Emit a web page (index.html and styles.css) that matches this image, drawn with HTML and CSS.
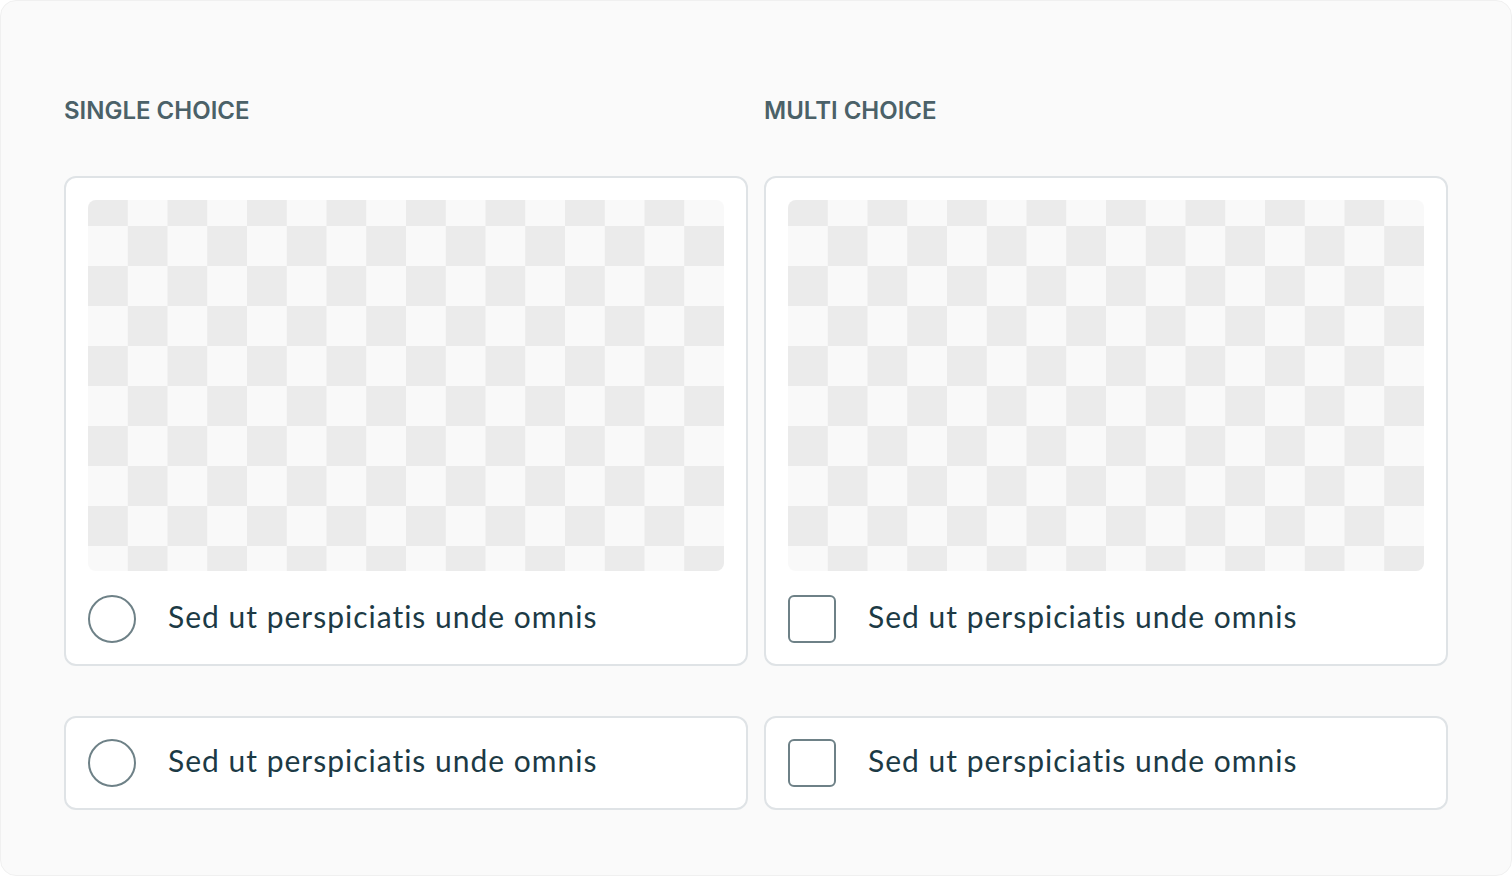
FILE: index.html
```html
<!DOCTYPE html>
<html lang="en">
<head>
<meta charset="utf-8">
<title>Choices</title>
<link rel="stylesheet" href="styles.css">
</head>
<body>
<div class="frame">
  <div class="grid">
    <div class="col">
      <h2 class="label">SINGLE CHOICE</h2>
      <div class="card card-media">
        <div class="checker"></div>
        <div class="option">
          <span class="radio"></span>
          <span class="text">Sed ut perspiciatis unde omnis</span>
        </div>
      </div>
      <div class="card card-row">
        <div class="option">
          <span class="radio"></span>
          <span class="text">Sed ut perspiciatis unde omnis</span>
        </div>
      </div>
    </div>
    <div class="col">
      <h2 class="label">MULTI CHOICE</h2>
      <div class="card card-media">
        <div class="checker"></div>
        <div class="option">
          <span class="checkbox"></span>
          <span class="text">Sed ut perspiciatis unde omnis</span>
        </div>
      </div>
      <div class="card card-row">
        <div class="option">
          <span class="checkbox"></span>
          <span class="text">Sed ut perspiciatis unde omnis</span>
        </div>
      </div>
    </div>
  </div>
</div>
</body>
</html>
```
FILE: styles.css
```css
* { box-sizing: border-box; }
html, body { margin: 0; padding: 0; background: #ffffff; }
.frame {
  width: 1512px;
  height: 876px;
  background: #fafafa;
  border: 1px solid #f0f0f0;
  border-radius: 16px;
  padding: 94px 63px 0 63px;
}
.grid {
  display: grid;
  grid-template-columns: 684px 684px;
  column-gap: 16px;
}
.col { display: flex; flex-direction: column; }
.label {
  margin: 0 0 49px 0;
  font-family: Inter, "Liberation Sans", sans-serif;
  font-weight: 600;
  font-size: 24px;
  line-height: 32px;
  color: #4b6168;
  letter-spacing: 0;
}
.card {
  background: #ffffff;
  border: 2px solid #dfe3e6;
  border-radius: 12px;
}
.card-media { padding: 22px 22px 21px 22px; }
.card-row { padding: 21px 22px; margin-top: 50px; }
.checker {
  height: 371px;
  border-radius: 8px;
  background-color: #f9f9f9;
  background-image: conic-gradient(#f9f9f9 0 25%, #ebebeb 0 50%, #f9f9f9 0 75%, #ebebeb 0);
  background-size: 79.5px 80px;
  background-position: 0 -14px;
  margin-bottom: 24px;
}
.option {
  display: flex;
  align-items: center;
  gap: 32px;
  height: 48px;
}
.radio {
  flex: none;
  width: 48px;
  height: 48px;
  border: 2px solid #6e8187;
  border-radius: 50%;
}
.checkbox {
  flex: none;
  width: 48px;
  height: 48px;
  border: 2px solid #6e8187;
  border-radius: 6px;
}
.text {
  font-family: Lato, "Noto Sans", sans-serif;
  font-size: 30px;
  line-height: 40px;
  letter-spacing: 1px;
  font-variant-ligatures: none;
  color: #1c3a45;
  margin-top: -7px;
}
```
